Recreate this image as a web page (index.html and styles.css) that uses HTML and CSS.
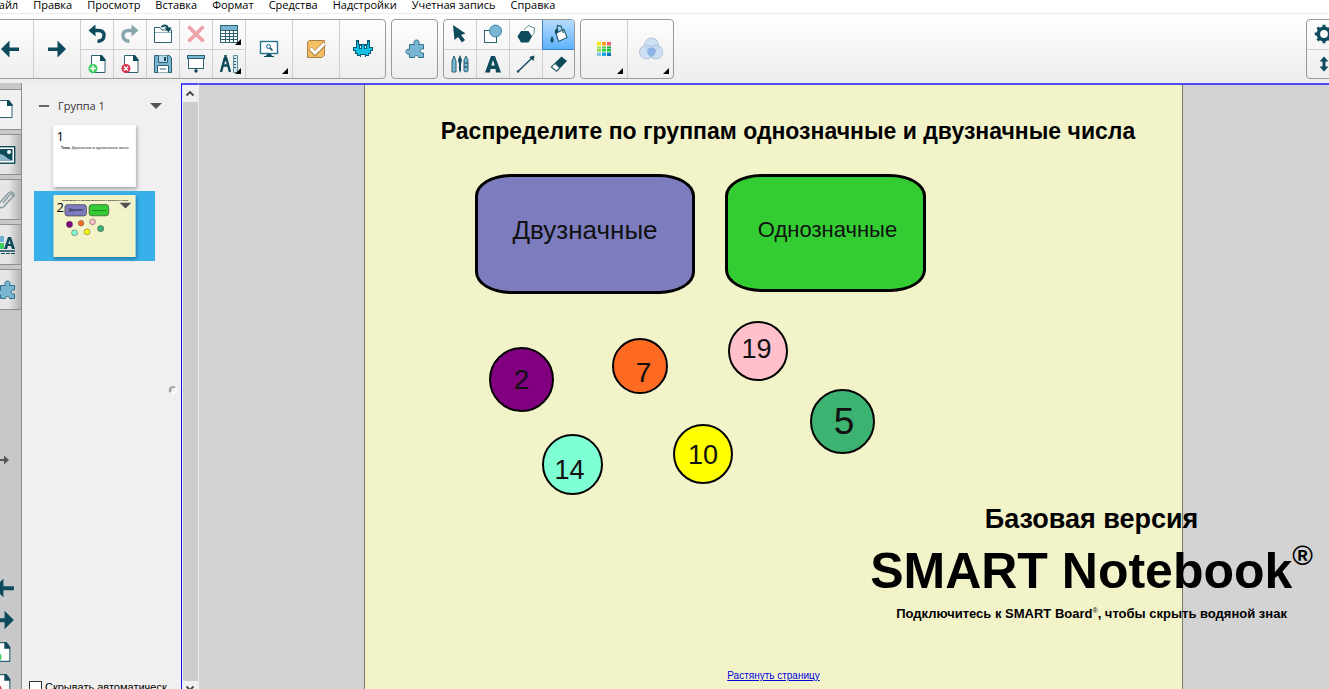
FILE: index.html
```html
<!DOCTYPE html>
<html lang="ru">
<head>
<meta charset="utf-8">
<title>SMART Notebook</title>
<link rel="stylesheet" href="styles.css">
</head>
<body>
<svg class="defs" aria-hidden="true">
  <symbol id="i-left" viewBox="0 0 20 20"><path d="M1 10 9.500 1.500V8.500H19V12H9.500V18.500Z" fill="#0d4a5b"/></symbol>
  <symbol id="i-right" viewBox="0 0 20 20"><path d="M19 10 10.500 1.500V8.500H1V12H10.500V18.500Z" fill="#0d4a5b"/></symbol>
  <symbol id="i-undo" viewBox="0 0 20 20"><path d="M1.500 6.500 8.500 .5V12.500Z" fill="currentColor"/><path d="M7 6.500H11.500C16 6.500 17 9 17 11.500 17 15 14.500 17.300 10.500 17.300" fill="none" stroke="currentColor" stroke-width="3.400"/></symbol>
  <symbol id="i-page" viewBox="0 0 20 20"><path d="M4.500 1.500H14L18 6V18.500H4.500Z" fill="#fff" stroke="#2d6271"/><path d="M13 1H15L18.500 5.500V7H13Z" fill="#0d4a5b"/></symbol>
  <symbol id="i-add" viewBox="0 0 20 20"><use href="#i-page"/><circle cx="6" cy="14.500" r="4.500" fill="#38cf5d"/><path d="M6 11.500V17.500M3 14.500H9" stroke="#fff" stroke-width="1.600"/></symbol>
  <symbol id="i-remove" viewBox="0 0 20 20"><use href="#i-page"/><circle cx="6" cy="14.500" r="4.500" fill="#dc3552"/><path d="M4 12.500 8 16.500M8 12.500 4 16.500" stroke="#fff" stroke-width="1.500"/></symbol>
  <symbol id="i-puzzle" viewBox="0 0 20 20"><path d="M4.500 5.500H9.500C8 3 9.500 1 11.500 1S15 3 13.500 5.500H18.500V10C16.500 9.500 15 10.500 15 12S16.500 14.500 18.500 14V18.500H13.500C13.500 17 12.500 16.500 11.500 16.500S9.500 17 9.500 18.500H4.500V15C2.500 15.500 1 14.500 1 12.500S2.500 9.800 4.500 10.500Z" fill="#78b6d4" stroke="#2f7088"/></symbol>
</svg>

<nav class="menu" aria-label="Главное меню">
  <button>Файл</button><button>Правка</button><button>Просмотр</button><button>Вставка</button><button>Формат</button><button>Средства</button><button>Надстройки</button><button>Учетная запись</button><button>Справка</button>
</nav>

<header class="toolbar">
  <div class="group group-start">
    <button class="big" aria-label="Предыдущая страница"><svg class="ic"><use href="#i-left"/></svg></button>
    <button class="big" aria-label="Следующая страница"><svg class="ic"><use href="#i-right"/></svg></button>
    <div class="pairs">
      <button aria-label="Отменить"><svg class="ic dark"><use href="#i-undo"/></svg></button>
      <button aria-label="Повторить"><svg class="ic faded"><use href="#i-undo"/></svg></button>
      <button aria-label="Открыть"><svg class="ic" viewBox="0 0 20 20"><path d="M1.500 18.500V3.500H7L9 6H18.500V18.500Z" fill="#fff" stroke="#2d6271"/><path d="M2 8.500H18" stroke="#8fb3bf"/><path d="M8.500 3C11 .5 14 1 15 4" fill="none" stroke="#0d4a5b" stroke-width="2"/><path d="M11.500 3.500H18.500L15.500 8.500Z" fill="#0d4a5b"/></svg></button>
      <button aria-label="Удалить"><svg class="ic" viewBox="0 0 20 20"><path d="M2.500 2.500 17.500 17.500M17.500 2.500 2.500 17.500" stroke="#f0a2aa" stroke-width="3.800"/></svg></button>
      <button aria-label="Таблица"><svg class="ic" viewBox="0 0 20 20"><rect x="1.500" y="1.500" width="17" height="17" fill="#fff" stroke="#2d6271"/><path d="M2 2H18V6H2Z" fill="#78b6d4"/><path d="M1.500 6.500H18.500M1.500 9.500H18.500M1.500 12.500H18.500M1.500 15.500H18.500M6.500 6V18M10.500 6V18M14.500 6V18" stroke="#2d6271"/></svg><i class="more"></i></button>
      <button aria-label="Добавить страницу"><svg class="ic"><use href="#i-add"/></svg></button>
      <button aria-label="Удалить страницу"><svg class="ic"><use href="#i-remove"/></svg></button>
      <button aria-label="Сохранить"><svg class="ic" viewBox="0 0 20 20"><path d="M1.500 1.500H16.500L18.500 4V18.500H1.500Z" fill="#78b6d4" stroke="#2d6271"/><path d="M5.500 1.500V8.500H14.500V1.500" fill="#b8dae8" stroke="#2d6271"/><rect x="11" y="3" width="2" height="4" fill="#0d4a5b"/><path d="M4.500 18.500V11.500H15.500V18.500" fill="#fff" stroke="#2d6271"/><path d="M7 15H13" stroke="#2d6271"/></svg></button>
      <button aria-label="Затенение экрана"><svg class="ic" viewBox="0 0 20 20"><rect x="2.500" y="4.500" width="15" height="10" fill="#fff" stroke="#2d6271"/><rect x="1.500" y="1.500" width="17" height="3" fill="#78b6d4" stroke="#2d6271"/><path d="M10 14V16" stroke="#0d4a5b"/><circle cx="10" cy="17" r="1.700" fill="#0d4a5b"/></svg></button>
      <button aria-label="Измерительные инструменты"><svg class="ic" viewBox="0 0 20 20"><path d="M6.500 1V4M5.500 5 2 18M7.500 5 11 18M3.500 11.500H9.500" stroke="#0d4a5b" stroke-width="2.400" fill="none"/><circle cx="6.500" cy="5" r="2.200" fill="#0d4a5b"/><path d="M14.500 1.500H18.500V18.500H14.500Z" fill="#d7e9f0" stroke="#5e8d9c"/><path d="M15 4.500H17M15 7.500H17M15 10.500H17M15 13.500H17" stroke="#2d6271"/></svg><i class="more"></i></button>
    </div>
    <button class="big" aria-label="Захват экрана"><svg class="ic" viewBox="0 0 20 20"><rect x="1.500" y="2.500" width="17" height="12" fill="#fff" stroke="#28728a" stroke-width="1.400"/><circle cx="9.500" cy="7.500" r="2" fill="#d7e9f0" stroke="#28728a"/><path d="M11 9 13.500 11.500" stroke="#0d4a5b" stroke-width="1.600"/><path d="M8 15H12L13 17H15V18H5V17H7Z" fill="#0d4a5b"/></svg><i class="more"></i></button>
    <button class="big" aria-label="Оценивание"><svg class="ic" viewBox="0 0 20 20"><path d="M3 1.500H18.500V16L16 18.500H1.500V3Z" fill="#f4be63" stroke="#a9824a"/><path d="M4 9.500 9 14.500 18.500 4.500" fill="none" stroke="#a9824a" stroke-width="4.500"/><path d="M4.500 9.500 9 14 18.500 4.500" fill="none" stroke="#fff" stroke-width="3"/></svg></button>
    <button class="big" aria-label="Игры"><svg class="ic" viewBox="0 0 20 20" shape-rendering="crispEdges"><path d="M3 1H6V5H14V1H17V8H20V12H18V15H16V17H13V18H12V16H8V18H7V17H4V15H2V12H0V8H3Z" fill="#075a78"/><path d="M4 3H5V6H15V3H16V9H19V11H17V14H15V16H13V15H7V16H5V14H3V11H1V9H4Z" fill="#10c0e2"/><path d="M6 6H9V10H6ZM11 6H14V10H11Z" fill="#075a78"/><path d="M7 7H8V9H7ZM12 7H13V9H12Z" fill="#d5f3fa"/></svg></button>
  </div>
  <div class="group">
    <button class="big" aria-label="Надстройки"><svg class="ic"><use href="#i-puzzle"/></svg></button>
  </div>
  <div class="group">
    <div class="pairs pairs-four">
      <button aria-label="Выбрать"><svg class="ic" viewBox="0 0 20 20"><path d="M3 1 15.500 9.500 11 11 15 16 12 18.500 8 13 4.500 16Z" fill="#0d4a5b"/></svg></button>
      <button aria-label="Фигуры"><svg class="ic" viewBox="0 0 20 20"><rect x="1.500" y="6.500" width="12" height="12" fill="#fff" stroke="#2d6271"/><circle cx="12.500" cy="7" r="6" fill="#78b6d4" stroke="#3f86a3"/></svg></button>
      <button aria-label="Многоугольники"><svg class="ic" viewBox="0 0 20 20"><path d="M8 6 12 1.500 18.500 4 18 9.500 14 14" fill="#fff" stroke="#5e8d9c"/><path d="M5 7H12.500L16 12.500 12.500 18.500H5L1.500 12.500Z" fill="#0d4a5b"/></svg></button>
      <button class="active" aria-label="Заливка"><svg class="ic" viewBox="0 0 20 20"><path d="M7 9 15 5.500 18 13.500 9.500 17.500Z" fill="#fff" stroke="#2d6271" stroke-width="1.200"/><path d="M7.500 9 8.500 1.500 12 2 14.500 9" fill="none" stroke="#2d6271" stroke-width="1.300"/><path d="M6.500 10C5 8 6 4.500 8.500 4.500L9.500 8.500Z" fill="#0d4a5b"/><path d="M3 12C5.500 16 4.500 18.500 3 18.500S.5 16 3 12Z" fill="#0d4a5b"/></svg></button>
      <button aria-label="Перья"><svg class="ic" viewBox="0 0 20 20"><path d="M2 7 4 2 6 7V18H2Z" fill="#78b6d4" stroke="#2d6271"/><path d="M10 1 12 6 11 10V16L10 19 9 16V10L8 6Z" fill="#0d4a5b"/><path d="M14 6 16 2 18 6V17L16 18 14 17Z" fill="#78b6d4" stroke="#2d6271"/><path d="M14 9H18M14 13H18" stroke="#2d6271" stroke-width="1.500"/></svg></button>
      <button aria-label="Текст"><svg class="ic" viewBox="0 0 20 20"><path fill-rule="evenodd" d="M2 18.500 8 2H12L18 18.500H13L12.500 15H7.500L7 18.500ZM8.300 11.500H11.700L10 6Z" fill="#0d4a5b"/></svg></button>
      <button aria-label="Линии"><svg class="ic" viewBox="0 0 20 20"><path d="M2 17.500 17 3" stroke="#0d4a5b" stroke-width="1.400"/><circle cx="2" cy="17.500" r="1.200" fill="#0d4a5b"/><path d="M18.500 1.500 17.500 7 13 3Z" fill="#0d4a5b"/></svg></button>
      <button aria-label="Ластик"><svg class="ic" viewBox="0 0 20 20"><path d="M1.500 13 12.500 2.500 18 7 7.500 18Z" fill="#0d4a5b"/><path d="M2.500 13 6 9.500 10.500 13.800 7.500 17Z" fill="#fff" stroke="#2d6271"/></svg></button>
    </div>
  </div>
  <div class="group">
    <button class="big" aria-label="Цвет"><svg class="ic" viewBox="0 0 20 20"><path d="M3 3H7V6.500H3Z" fill="#f6e70c"/><path d="M8 3H12V6.500H8Z" fill="#f79a20"/><path d="M13 3H17V6.500H13Z" fill="#ec6068"/><path d="M3 7.500H7V9.500H3Z" fill="#a9dc55"/><path d="M8 7.500H12V9.500H8Z" fill="#58cc45"/><path d="M13 7.500H17V9.500H13Z" fill="#0dae3b"/><path d="M3 10H7V12.500H3Z" fill="#8bd84b"/><path d="M8 10H12V12.500H8Z" fill="#22d93d"/><path d="M13 10H17V12.500H13Z" fill="#14c43c"/><path d="M3 13.500H7V17H3Z" fill="#7fc6e4"/><path d="M8 13.500H12V17H8Z" fill="#1da3dc"/><path d="M13 13.500H17V17H13Z" fill="#0e72b8"/></svg><i class="more"></i></button>
    <button class="big" aria-label="Прозрачность"><svg class="ic ic-wide" viewBox="0 0 24 24"><g fill="#bdd5f2" fill-opacity=".7" stroke="#b4c4d9"><circle cx="12.500" cy="8" r="7"/><circle cx="7.500" cy="15" r="7"/><circle cx="17" cy="15" r="7"/></g><path d="M8 13C10 9.500 15 9.500 17 13 17 17 14 19.500 12.300 20 10 19 8 17 8 13Z" fill="#8db4e4"/></svg><i class="more"></i></button>
  </div>
  <div class="group group-end">
    <div class="pairs pairs-one">
      <button aria-label="Настройки"><svg class="ic" viewBox="0 0 20 20"><circle cx="10" cy="10" r="5.700" fill="none" stroke="#0d4a5b" stroke-width="3.600"/><path d="M10 .8V4M10 16V19.200M.8 10H4M16 10H19.200M3.500 3.500 6 6M14 14 16.500 16.500M16.500 3.500 14 6M6 14 3.500 16.500" stroke="#0d4a5b" stroke-width="3"/></svg></button>
      <button aria-label="Переместить панель"><svg class="ic" viewBox="0 0 20 20"><path d="M10 2.500 14.500 7.500H11.500V12.500H14.500L10 17.500 5.500 12.500H8.500V7.500H5.500Z" fill="#0d4a5b"/></svg></button>
    </div>
  </div>
</header>

<main class="work">
  <aside class="rail">
    <button class="tab current" aria-label="Сортировщик страниц"><svg class="ic"><use href="#i-page"/></svg></button>
    <button class="tab" aria-label="Галерея"><svg class="ic" viewBox="0 0 20 20"><rect x=".7" y="1.700" width="18" height="16.500" fill="#fff" stroke="#0d4a5b" stroke-width="1.400"/><rect x="3" y="4" width="13.500" height="11.500" fill="#0d4a5b"/><path d="M3 9C7 8 11 14 16.500 15.500H3Z" fill="#8ab6c8"/><circle cx="13" cy="7" r="2" fill="#fff"/></svg></button>
    <button class="tab" aria-label="Вложения"><svg class="ic" viewBox="0 0 20 20"><path d="M7 13 13.500 5C15.500 3 18 5 16 7.500L8 16.500C5 19.500 1 16.500 3.500 13L12 3.500C15 .5 20 3 17.500 7" fill="none" stroke="#8a9ca3" stroke-width="1.500"/></svg></button>
    <button class="tab" aria-label="Свойства"><svg class="ic" viewBox="0 0 20 20"><path d="M0 1H8V7H0Z" fill="#6bb2d3"/><path d="M0 8H8V14H0Z" fill="#3fce5f"/><path fill-rule="evenodd" d="M8 14 12 2H15L19 14H16L15 11H12L11 14ZM12.500 9H14.500L13.500 5Z" fill="#0d4a5b"/><path d="M0 16H19" stroke="#0d4a5b" stroke-width="1.500"/><path d="M0 18.500H19" stroke="#0d4a5b" stroke-dasharray="4 1"/></svg></button>
    <button class="tab" aria-label="Надстройки"><svg class="ic"><use href="#i-puzzle"/></svg></button>
    <div class="gap-a"></div>
    <svg class="grip" viewBox="0 0 20 18"><path d="M0 9H12" stroke="#555" stroke-width="2"/><path d="M11 4.500 16 9 11 13.500Z" fill="#555"/></svg>
    <div class="gap-b"></div>
    <button class="step" aria-label="Назад"><svg class="ic ic-step"><use href="#i-left"/></svg></button>
    <button class="step" aria-label="Вперёд"><svg class="ic ic-step"><use href="#i-right"/></svg></button>
    <button class="step" aria-label="Добавить"><svg class="ic ic-step ic-doc"><use href="#i-add"/></svg></button>
    <button class="step" aria-label="Удалить"><svg class="ic ic-step ic-doc"><use href="#i-remove"/></svg></button>
  </aside>

  <section class="sorter">
    <div class="sorter-head"><span class="minus"></span><span class="group-name">Группа 1</span><span class="caret"></span></div>
    <button class="slide-item" aria-label="Страница 1">
      <svg class="thumb" viewBox="0 0 820 620"><rect width="820" height="620" fill="#fff"/><text x="30" y="160" font-size="130" class="mini-no">1</text><text x="76" y="244" font-size="36" class="mini-text" fill="#222"><tspan font-weight="bold">Тема.</tspan> Двузначные и однозначные числа</text></svg>
    </button>
    <button class="slide-item selected" aria-label="Страница 2">
      <svg class="thumb" viewBox="0 0 820 620"><rect width="820" height="620" fill="#f3f3ca"/><text x="84" y="56" font-size="22" class="mini-text" font-weight="bold">Распределите по группам однозначные и двузначные числа</text><g stroke="#333" stroke-width="6"><rect x="114" y="96" width="216" height="114" rx="28" fill="#7c7cbe"/><rect x="356" y="96" width="196" height="112" rx="28" fill="#33cd33"/></g><text x="152" y="156" font-size="26" class="mini-text">Двузначные</text><text x="390" y="156" font-size="22" class="mini-text">Однозначные</text><g stroke="#444" stroke-width="5"><circle cx="160" cy="294" r="31" fill="#800080"/><circle cx="276" cy="282" r="27" fill="#ff6a22"/><circle cx="390" cy="268" r="29" fill="#ffc0cb"/><circle cx="472" cy="336" r="31" fill="#3cb371"/><circle cx="210" cy="378" r="29" fill="#7fffd4"/><circle cx="336" cy="368" r="29" fill="#ff0"/></g><text x="30" y="166" font-size="130" class="mini-no">2</text><path d="M662 78H778L720 134Z" fill="#505050"/></svg>
    </button>
    <div class="splitter-dot"></div>
    <label class="autohide"><input type="checkbox"><span>Скрывать автоматическ</span></label>
  </section>

  <div class="scroll">
    <button aria-label="Прокрутить вверх"><svg viewBox="0 0 10 10"><path d="M1.500 6.500 5 3 8.500 6.500" fill="none" stroke="#444" stroke-width="1.800"/></svg></button>
    <div class="track"></div>
    <button class="down" aria-label="Прокрутить вниз"><svg viewBox="0 0 10 10"><path d="M1.500 3.500 5 7 8.500 3.500" fill="none" stroke="#444" stroke-width="1.800"/></svg></button>
  </div>

  <div class="canvas">
    <article class="page">
      <h1 class="title">Распределите по группам однозначные и двузначные числа</h1>
      <div class="box box-two">Двузначные</div>
      <div class="box box-one">Однозначные</div>
      <div class="ball b2"><span>2</span></div>
      <div class="ball b7"><span>7</span></div>
      <div class="ball b19"><span>19</span></div>
      <div class="ball b5"><span>5</span></div>
      <div class="ball b14"><span>14</span></div>
      <div class="ball b10"><span>10</span></div>
      <a class="fit" href="#">Растянуть страницу</a>
    </article>
    <div class="mark">
      <p class="mark-top">Базовая версия</p>
      <p class="mark-name">SMART Notebook<sup>®</sup></p>
      <p class="mark-note">Подключитесь к SMART Board<sup>®</sup>, чтобы скрыть водяной знак</p>
    </div>
  </div>
</main>
</body>
</html>
```

FILE: styles.css
```css
* { box-sizing: border-box; }

body {
  margin: 0;
  height: 100vh;
  display: flex;
  flex-direction: column;
  overflow: hidden;
  background: #fff;
  color: #000;
  font: 11px/16px "Open Sans", "Noto Sans", sans-serif;
}

button {
  margin: 0;
  padding: 0;
  border: 0;
  background: none;
  color: inherit;
  font: inherit;
}

.defs { display: none; }

/* Menu */
.menu {
  display: flex;
  gap: 15px;
  flex: none;
  height: 17px;
  margin: -3px 0 0 -10px;
  border-bottom: 1px solid #ececec;
  white-space: nowrap;
  align-items: flex-start;
}

/* Toolbar */
.toolbar {
  display: flex;
  flex: none;
  gap: 5px;
  padding: 5px 0 4px;
  background: linear-gradient(#fff, #ededed);
  overflow: hidden;
}

.group {
  display: flex;
  flex: none;
  height: 60px;
  border: 1px solid #9a9a9a;
  border-radius: 4px;
  background: linear-gradient(#fdfdfd, #eee);
  overflow: hidden;
}

.group-start { margin-left: -14px; }
.group-end { margin: 0 -12px 0 auto; }

.group button {
  display: flex;
  align-items: center;
  justify-content: center;
  position: relative;
  border-left: 1px solid #cfcfcf;
}

.big { width: 47px; }
.group > .big:first-child { width: 46px; border-left: 0; }
.group > .big:last-child { width: 46px; }
.group > .big:only-child { width: 45px; }

.pairs {
  display: grid;
  grid-template-columns: repeat(5, 33px);
  grid-template-rows: 30px 28px;
}

.pairs-four { grid-template-columns: 32px 33px 33px 32px; }
.pairs-one { grid-template-columns: 33px; }
.pairs button { border-bottom: 1px solid #cfcfcf; padding-bottom: 1px; }
.pairs button:nth-child(n+6), .pairs-four button:nth-child(5), .pairs-one button:last-child { border-bottom: 0; padding-bottom: 0; }
.pairs-four button:nth-child(4n+1), .pairs-one button { border-left: 0; }

.group .active {
  background: linear-gradient(#b5dcff, #5fb2fb);
  border-color: #3c7fcb;
}

.ic { width: 20px; height: 20px; flex: none; display: block; }
.ic-wide { width: 24px; height: 24px; }
.dark { color: #0d4a5b; }
.faded { color: #86a5ad; transform: scaleX(-1); }

.more {
  position: absolute;
  right: 4px;
  bottom: 4px;
  border-left: 6px solid transparent;
  border-bottom: 6px solid #000;
}

/* Work area */
.work { display: flex; flex: 1; min-height: 0; }

.rail {
  display: flex;
  flex-direction: column;
  flex: none;
  width: 22px;
  margin-bottom: -11px;
  padding-top: 6px;
  background: #c8c8c8;
  border-right: 1px solid #8c8c8c;
  overflow: hidden;
}

.tab {
  display: flex;
  align-items: center;
  justify-content: flex-end;
  flex: none;
  height: 41px;
  margin-bottom: 4px;
  padding-right: 5px;
  border: 1px solid #8f8f8f;
  border-width: 1px 0;
  background: linear-gradient(90deg, #e6e6e6 40%, #b4b4b4);
}

.tab.current { padding: 0 8px 2px 0; background: #f0f0f0; margin-right: -1px; }
.gap-a { flex: 141; }
.gap-b { flex: 106; }
.grip { flex: none; width: 20px; height: 18px; margin-left: -7px; }
.step { display: flex; align-items: center; justify-content: flex-end; flex: none; height: 32px; padding-right: 6px; }
.ic-step { width: 22px; height: 22px; }
.ic-doc { margin-right: 3px; }

.sorter {
  position: relative;
  display: flex;
  flex-direction: column;
  flex: none;
  width: 159px;
  padding: 14px 12px 0;
  background: #f0f0f0;
  overflow: hidden;
}

.sorter-head { display: flex; align-items: center; height: 18px; margin: 0 7px 6px 5px; color: #333; }
.minus { width: 10px; height: 2px; background: #666; margin-right: 9px; }
.group-name { flex: 1; }
.caret { border: 6px solid transparent; border-top-color: #555; border-bottom: 0; }

.slide-item { display: flex; flex: none; height: 70px; padding: 4px 19px; margin-right: 14px; }
.slide-item.selected { background: #38b1eb; }
.thumb { width: 83px; height: 62px; box-shadow: 1px 2px 4px #0005; }
.mini-no { font-family: "Open Sans", sans-serif; }
.mini-text { font-family: "Liberation Sans", Arial, sans-serif; }

.splitter-dot {
  position: absolute;
  right: 4px;
  top: 50%;
  width: 8px;
  height: 8px;
  border: 2px solid #fff;
  border-left-color: #999;
  border-top-color: #aaa;
  border-radius: 50%;
}

.autohide {
  display: flex;
  gap: 3px;
  height: 9px;
  margin: auto 0 0 -5px;
  white-space: nowrap;
  font: 11px/14px "Liberation Sans", Arial, sans-serif;
}

.autohide input {
  appearance: none;
  flex: none;
  width: 13px;
  height: 13px;
  margin: 1px 0 0;
  border: 1px solid #333;
  background: #fff;
}

.scroll {
  display: flex;
  flex-direction: column;
  flex: none;
  width: 18px;
  border-left: 1px solid #1414f0;
  border-right: 1px solid #eee;
  border-top: 2px solid #4c4cf0;
  background: #f0f0f0;
}

.scroll button { display: flex; align-items: center; justify-content: center; height: 17px; }
.scroll .down { height: 8px; align-items: flex-start; overflow: hidden; padding-top: 2px; }
.scroll svg { width: 10px; height: 10px; flex: none; }
.track { flex: 1; margin-left: 1px; background: #cdcdcd; }

/* Free canvas with the lesson page */
.canvas {
  position: relative;
  display: grid;
  grid-template-columns: 165fr 819fr 146fr;
  flex: 1;
  min-width: 0;
  background: #d3d3d3;
  border-top: 2px solid #4c4cf0;
  font-family: "Liberation Sans", Arial, sans-serif;
  overflow: hidden;
}

.page {
  position: relative;
  display: flex;
  flex-direction: column;
  align-items: center;
  grid-column: 2;
  background: #f3f3ca;
  border: 1px solid #77776a;
  border-width: 0 1px;
}

.title { margin: 32px 0 0 29px; font-size: 23px; line-height: 28px; white-space: nowrap; }

.box {
  position: absolute;
  display: flex;
  align-items: center;
  justify-content: center;
  border: 3px solid #000;
  border-radius: 36px / 22px;
  color: #111;
}

.box-two { left: 110px; top: 89px; width: 220px; height: 120px; background: #7c7cbe; font-size: 26px; padding-bottom: 8px; }
.box-one { left: 360px; top: 89px; width: 201px; height: 118px; background: #33cd33; font-size: 22px; padding: 0 0 6px 4px; }

.ball {
  position: absolute;
  display: flex;
  align-items: center;
  justify-content: center;
  border: 2px solid #000;
  border-radius: 50%;
  font-size: 28px;
  line-height: 32px;
  color: #111;
}

.b2 { left: 124px; top: 262px; width: 65px; height: 65px; background: #800080; }
.b7 { left: 247px; top: 253px; width: 56px; height: 56px; background: #ff6a22; padding: 14px 0 0 7px; }
.b19 { left: 363px; top: 236px; width: 60px; height: 60px; background: #ffc0cb; padding: 0 3px 5px 0; font-size: 27px; }
.b5 { left: 445px; top: 304px; width: 65px; height: 65px; background: #3cb371; font-size: 37px; padding-left: 3px; }
.b14 { left: 177px; top: 349px; width: 61px; height: 61px; background: #7fffd4; padding: 10px 6px 0 0; font-size: 27px; }
.b10 { left: 308px; top: 339px; width: 60px; height: 60px; background: #ff0; padding-top: 2px; font-size: 27px; }

.fit { margin: auto 0 6px; color: #0000e0; font-size: 10px; line-height: 14px; }

.mark { position: absolute; right: 16px; bottom: 68px; text-align: center; font-weight: bold; white-space: nowrap; }
.mark p { margin: 0; }
.mark-top { font-size: 27px; line-height: 32px; }
.mark-name { font-size: 50px; line-height: 72px; }
.mark-name sup { font-size: 28px; line-height: 0; vertical-align: 23px; }
.mark-note { font-size: 13px; line-height: 14px; }
.mark-note sup { font-size: 7px; line-height: 0; font-weight: normal; }
```
